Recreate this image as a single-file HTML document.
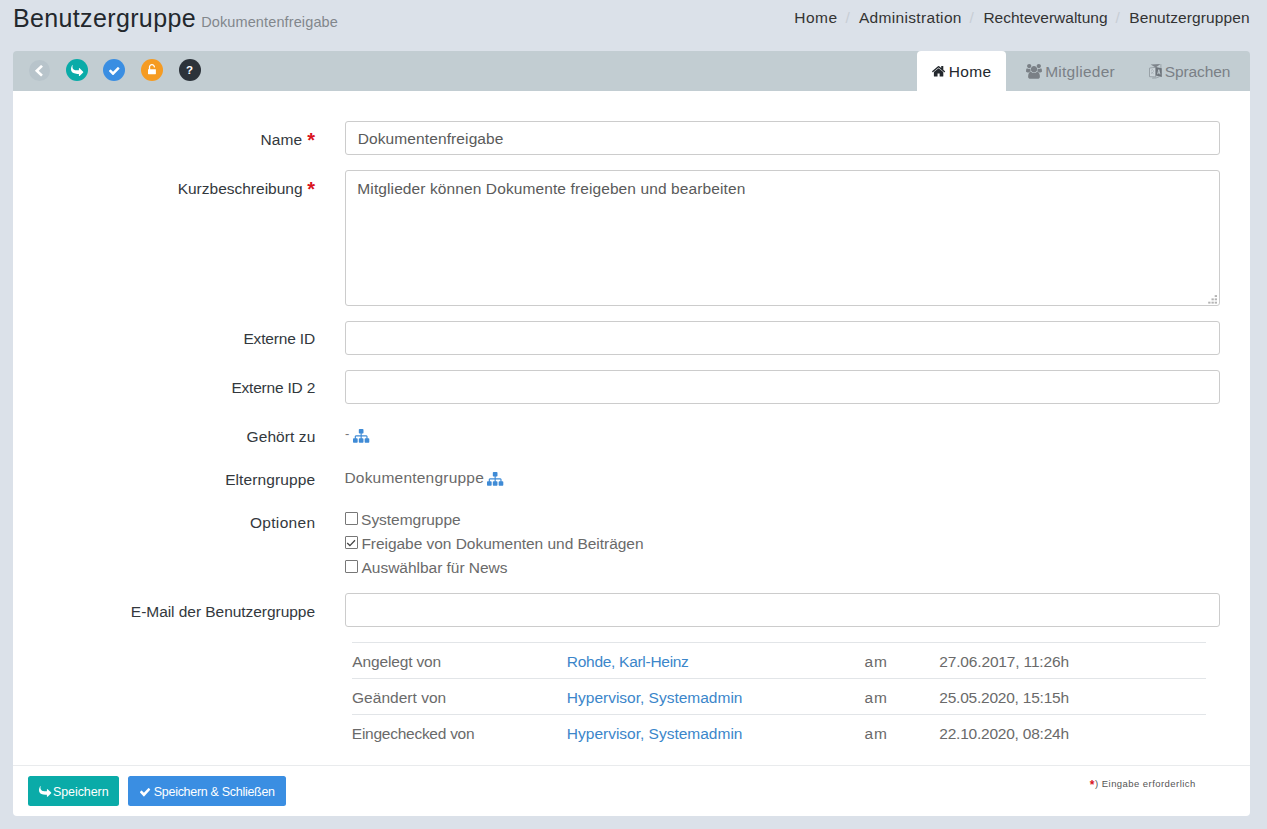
<!DOCTYPE html>
<html lang="de">
<head>
<meta charset="utf-8">
<title>Benutzergruppe</title>
<style>
*{box-sizing:border-box;margin:0;padding:0}
html,body{width:1267px;height:829px;overflow:hidden}
body{background:#dbe1e9;font-family:"Liberation Sans",sans-serif;font-size:15.5px;color:#333;position:relative}
.t{position:absolute;white-space:nowrap;font-weight:400}
.a{position:absolute}
.toolbar{left:13px;top:51px;width:1237px;height:40px;background:#c2cdd2;border-radius:4px 4px 0 0}
.panel{left:13px;top:91px;width:1237px;height:725px;background:#fff;border-radius:0 0 4px 4px}
.circ{top:59px;width:22px;height:22px;border-radius:50%}
.tabact{left:917px;top:51px;width:89px;height:40px;background:#fff;border-radius:4px 4px 0 0}
.inp{left:345px;width:875px;height:34px;border:1px solid #ccc;border-radius:3px;background:#fff}
.cb{left:345px;width:13px;height:13px;border:1px solid #777;border-radius:1px;background:#fff}
.tl{left:352px;width:853.5px;height:1px;background:#e2e5e8}
.btn{top:776px;height:30px;border-radius:2.5px}
.sep{top:7.5px;font-size:15.5px;line-height:20px;color:#c8ced5}
.req{color:#d9141e;font-weight:700;font-size:20px;line-height:20px}
svg{position:absolute;overflow:visible}
</style>
</head>
<body>
<div class="a toolbar"></div>
<div class="a panel"></div>
<div class="a tabact"></div>

<!-- breadcrumb separators -->
<div class="t sep" style="left:845.5px">/</div>
<div class="t sep" style="left:969.5px">/</div>
<div class="t sep" style="left:1115.5px">/</div>

<!-- toolbar round buttons -->
<div class="a circ" style="left:28.5px;top:59.5px;width:21px;height:21px;background:#b8c4cb"></div>
<div class="a circ" style="left:66px;background:#0aaba8"></div>
<div class="a circ" style="left:103px;background:#3a8ee2"></div>
<div class="a circ" style="left:141px;background:#f59b22"></div>
<div class="a circ" style="left:179px;background:#2c333a"></div>
<svg style="left:35.4px;top:64.8px" width="7.80" height="11.40" viewBox="410 26 1036 1612" preserveAspectRatio="none"><path fill="#fff" d="M1427 301l-531 531 531 531q19 19 19 45t-19 45l-166 166q-19 19-45 19t-45-19l-742-742q-19-19-19-45t19-45l742-742q19-19 45-19t45 19l166 166q19 19 19 45t-19 45z"/></svg>
<svg style="left:70.8px;top:64.9px" width="12.30" height="11.10" viewBox="0 64 1792 1600" preserveAspectRatio="none"><path fill="#fff" transform="translate(0,1728) scale(1,-1)" d="M1792 640q0 26-19 45l-512 512q-19 19-45 19t-45-19-19-45v-256h-224q-98 0-175.500 6t-154 21.500-133 42.500-105.500 69.500-80 101-48.500 138.500-17.500 181q0 55 5 123 0 6 2.500 23.500t2.500 26.500q0 15-8.500 25t-23.500 10q-16 0-28-17-7-9-13-22t-13.500-30-10.500-24q-127-285-127-451 0-199 53-333 162-403 875-403h224v-256q0-26 19-45t45-19 45 19l512 512q19 19 19 45z"/></svg>
<svg style="left:108.9px;top:66.8px" width="10.50" height="8.10" viewBox="121 334 1550 1188" preserveAspectRatio="none"><path fill="#fff" d="M1671 566q0 40-28 68l-724 724-136 136q-28 28-68 28t-68-28l-136-136-362-362q-28-28-28-68t28-68l136-136q28-28 68-28t68 28l294 295 656-657q28-28 68-28t68 28l136 136q28 28 28 68z"/></svg>
<svg style="left:148.0px;top:64.4px" width="7.90" height="10.30" viewBox="320 0 1152 1536" preserveAspectRatio="none"><path fill="#fff" d="M1376 768q40 0 68 28t28 68v576q0 40-28 68t-68 28h-960q-40 0-68-28t-28-68v-576q0-40 28-68t68-28h32v-320q0-185 131.500-316.500t316.500-131.500 316.500 131.500 131.500 316.500q0 26-19 45t-45 19h-64q-26 0-45-19t-19-45q0-106-75-181t-181-75-181 75-75 181v320h736z"/></svg>
<div class="t" id="qm" style="left:186.1px;top:63.4px;font-size:11.5px;line-height:15px;font-weight:700;color:#fff">?</div>

<!-- tab icons -->
<svg style="left:932.0px;top:66.2px" width="13.20" height="10.60" viewBox="89.88888549804688 253 1612.22216796875 1283" preserveAspectRatio="none"><path fill="#23282d" d="M1472 992v480q0 26-19 45t-45 19h-384v-384h-256v384h-384q-26 0-45-19t-19-45v-480q0-1 .5-3t.5-3l575-474 575 474q1 2 1 6zm223-69l-62 74q-8 9-21 11h-3q-13 0-21-7l-692-577-692 577q-12 8-24 7-13-2-21-11l-62-74q-8-10-7-23.500t11-21.500l719-599q32-26 76-26t76 26l244 204v-195q0-14 9-23t23-9h192q14 0 23 9t9 23v408l219 182q10 8 11 21.500t-7 23.500z"/></svg>
<svg style="left:1025.8px;top:64.0px" width="16.00" height="14.80" viewBox="-64 0 1920 1792" preserveAspectRatio="none"><path fill="#7a8086" d="M529 896q-162 5-265 128h-134q-82 0-138-40.500t-56-118.500q0-353 124-353 6 0 43.500 21t97.500 42.500 119 21.500q67 0 133-23-5 37-5 66 0 139 81 256zm1071 637q0 120-73 189.500t-194 69.500h-874q-121 0-194-69.500t-73-189.500q0-53 3.500-103.500t14-109 26.500-108.500 43-97.500 62-81 85.500-53.500 111.500-20q10 0 43 21.500t73 48 107 48 135 21.500 135-21.500 107-48 73-48 43-21.500q61 0 111.500 20t85.500 53.500 62 81 43 97.500 26.500 108.500 14 109 3.500 103.500zm-1024-1277q0 106-75 181t-181 75-181-75-75-181 75-181 181-75 181 75 75 181zm704 384q0 159-112.500 271.500t-271.500 112.500-271.500-112.500-112.500-271.500 112.500-271.500 271.500-112.500 271.500 112.500 112.500 271.500zm576 225q0 78-56 118.500t-138 40.500h-134q-103-123-265-128 81-117 81-256 0-29-5-66 66 23 133 23 59 0 119-21.500t97.500-42.500 43.500-21q124 0 124 353zm-128-609q0 106-75 181t-181 75-181-75-75-181 75-181 181-75 181 75 75 181z"/></svg>
<svg style="left:1149px;top:64px" width="13" height="15" viewBox="0 0 13 15"><path d="M0.5 4.1 L6.7 3.3 V12.9 L0.5 12.7 Z" fill="#cbd4d9" stroke="#8d959c" stroke-width="0.8"/><path d="M1.6 0.4 L11.6 0.1 L6.7 3.5 Z" fill="#7d848b"/><path d="M11.9 0.2 V4.2" stroke="#8d959c" stroke-width="0.7"/><path d="M6.7 3.1 L12.8 4.3 V12.9 L6.7 11.4 Z" fill="#6d747b"/><path d="M8.6 10.2 L9.8 5.6 L11 10.4 M9 8.8 H10.7" fill="none" stroke="#c3cdd3" stroke-width="0.9"/><path d="M2.2 6.4 Q3.6 4.8 4.6 6.6 M2 9.6 Q3.6 8.4 4.8 7.4 M2.4 8 L4.6 9.8" fill="none" stroke="#9aa3aa" stroke-width="0.7"/><path d="M3.2 14.1 Q7.2 14.6 10.6 12.6" fill="none" stroke="#8d959c" stroke-width="0.8"/></svg>

<!-- inputs -->
<div class="a inp" style="top:121px"></div>
<div class="a inp" style="top:170px;height:136px"></div>
<div class="a inp" style="top:321px"></div>
<div class="a inp" style="top:370px"></div>
<div class="a inp" style="top:593px"></div>
<svg style="left:1208px;top:295px" width="10" height="9" viewBox="0 0 10 9"><g fill="#b4b4b4"><rect x="6.7" y="0.1" width="2.3" height="1.9"/><rect x="3.5" y="3.4" width="2.3" height="1.9"/><rect x="6.7" y="3.4" width="2.3" height="1.9"/><rect x="0.2" y="6.7" width="2.3" height="1.9"/><rect x="3.5" y="6.7" width="2.3" height="1.9"/><rect x="6.7" y="6.7" width="2.3" height="1.9"/></g></svg>

<!-- required stars -->
<div class="t req" style="left:307.3px;top:130px">*</div>
<div class="t req" style="left:307.3px;top:179px">*</div>

<!-- dash + sitemap icons -->
<div class="t" id="dash" style="left:345px;top:424.3px;font-size:13px;line-height:20px;color:#777;letter-spacing:0">-</div>
<svg style="left:353.1px;top:429.2px" width="16.30" height="13.80" viewBox="0 128 1792 1536" preserveAspectRatio="none"><path fill="#3f8bd6" d="M1792 1248v320q0 40-28 68t-68 28h-320q-40 0-68-28t-28-68v-320q0-40 28-68t68-28h96v-192h-512v192h96q40 0 68 28t28 68v320q0 40-28 68t-68 28h-320q-40 0-68-28t-28-68v-320q0-40 28-68t68-28h96v-192h-512v192h96q40 0 68 28t28 68v320q0 40-28 68t-68 28h-320q-40 0-68-28t-28-68v-320q0-40 28-68t68-28h96v-192q0-52 38-90t90-38h512v-192h-96q-40 0-68-28t-28-68v-320q0-40 28-68t68-28h320q40 0 68 28t28 68v320q0 40-28 68t-68 28h-96v192h512q52 0 90 38t38 90v192h96q40 0 68 28t28 68z"/></svg>
<svg style="left:487px;top:472.2px" width="16.30" height="13.80" viewBox="0 128 1792 1536" preserveAspectRatio="none"><path fill="#3f8bd6" d="M1792 1248v320q0 40-28 68t-68 28h-320q-40 0-68-28t-28-68v-320q0-40 28-68t68-28h96v-192h-512v192h96q40 0 68 28t28 68v320q0 40-28 68t-68 28h-320q-40 0-68-28t-28-68v-320q0-40 28-68t68-28h96v-192h-512v192h96q40 0 68 28t28 68v320q0 40-28 68t-68 28h-320q-40 0-68-28t-28-68v-320q0-40 28-68t68-28h96v-192q0-52 38-90t90-38h512v-192h-96q-40 0-68-28t-28-68v-320q0-40 28-68t68-28h320q40 0 68 28t28 68v320q0 40-28 68t-68 28h-96v192h512q52 0 90 38t38 90v192h96q40 0 68 28t28 68z"/></svg>

<!-- checkboxes -->
<div class="a cb" style="top:512px"></div>
<div class="a cb" style="top:536px"></div>
<div class="a cb" style="top:560px"></div>
<svg style="left:345px;top:536px" width="13" height="13" viewBox="0 0 13 13"><path d="M2.2 7.1 L4.9 9.6 L10 4.3" fill="none" stroke="#444" stroke-width="1.3"/></svg>

<!-- info table lines -->
<div class="a tl" style="top:642px"></div>
<div class="a tl" style="top:678px"></div>
<div class="a tl" style="top:714px"></div>

<!-- footer -->
<div class="a" style="left:13px;top:765px;width:1237px;height:1px;background:#e9ebed"></div>
<div class="a btn" style="left:28px;width:91px;background:#0aaba8"></div>
<div class="a btn" style="left:128px;width:158px;background:#3a8ee2"></div>
<svg style="left:38.7px;top:786.2px" width="12.30" height="10.80" viewBox="0 64 1792 1600" preserveAspectRatio="none"><path fill="#fff" transform="translate(0,1728) scale(1,-1)" d="M1792 640q0 26-19 45l-512 512q-19 19-45 19t-45-19-19-45v-256h-224q-98 0-175.500 6t-154 21.500-133 42.500-105.500 69.500-80 101-48.500 138.500-17.500 181q0 55 5 123 0 6 2.500 23.500t2.500 26.500q0 15-8.500 25t-23.500 10q-16 0-28-17-7-9-13-22t-13.500-30-10.500-24q-127-285-127-451 0-199 53-333 162-403 875-403h224v-256q0-26 19-45t45-19 45 19l512 512q19 19 19 45z"/></svg>
<svg style="left:139.9px;top:787.6px" width="10.20" height="8.40" viewBox="121 334 1550 1188" preserveAspectRatio="none"><path fill="#fff" d="M1671 566q0 40-28 68l-724 724-136 136q-28 28-68 28t-68-28l-136-136-362-362q-28-28-28-68t28-68l136-136q28-28 68-28t68 28l294 295 656-657q28-28 68-28t68 28l136 136q28 28 28 68z"/></svg>
<div class="t" id="ftast" style="left:1089.8px;top:778.4px;font-size:12px;line-height:14px;font-weight:700;color:#d9141e">*</div>
<div class="t" id="h1" style="left:12.88px;top:2.13px;font-size:25px;line-height:32px;letter-spacing:0.369px;color:#23282d">Benutzergruppe</div>
<div class="t" id="h1s" style="left:201.16px;top:13.27px;font-size:14.5px;line-height:19px;letter-spacing:0.121px;color:#82878c">Dokumentenfreigabe</div>
<div class="t" id="bc1" style="left:794.27px;top:7.53px;font-size:15.5px;line-height:20px;letter-spacing:0.505px;color:#333">Home</div>
<div class="t" id="bc2" style="left:858.91px;top:7.53px;font-size:15.5px;line-height:20px;letter-spacing:0.334px;color:#333">Administration</div>
<div class="t" id="bc3" style="left:983.40px;top:7.53px;font-size:15.5px;line-height:20px;letter-spacing:0.006px;color:#333">Rechteverwaltung</div>
<div class="t" id="bc4" style="left:1129.24px;top:7.53px;font-size:15.5px;line-height:20px;letter-spacing:0.098px;color:#333">Benutzergruppen</div>
<div class="t" id="t1" style="left:948.86px;top:62.43px;font-size:15.5px;line-height:20px;letter-spacing:0.307px;color:#23282d">Home</div>
<div class="t" id="t2" style="left:1045.18px;top:62.43px;font-size:15.5px;line-height:20px;letter-spacing:0.261px;color:#7a8086">Mitglieder</div>
<div class="t" id="t3" style="left:1164.87px;top:62.43px;font-size:15.5px;line-height:20px;letter-spacing:-0.135px;color:#7a8086">Sprachen</div>
<div class="t" id="l1" style="left:260.54px;top:129.53px;font-size:15.5px;line-height:20px;letter-spacing:0.080px;color:#33383d">Name</div>
<div class="t" id="l2" style="left:177.67px;top:179.43px;font-size:15.5px;line-height:20px;letter-spacing:-0.003px;color:#33383d">Kurzbeschreibung</div>
<div class="t" id="l3" style="left:243.39px;top:328.63px;font-size:15.5px;line-height:20px;letter-spacing:-0.161px;color:#33383d">Externe ID</div>
<div class="t" id="l4" style="left:231.41px;top:377.63px;font-size:15.5px;line-height:20px;letter-spacing:-0.209px;color:#33383d">Externe ID 2</div>
<div class="t" id="l5" style="left:246.54px;top:426.83px;font-size:15.5px;line-height:20px;letter-spacing:0.086px;color:#33383d">Gehört zu</div>
<div class="t" id="l6" style="left:225.13px;top:470.33px;font-size:15.5px;line-height:20px;letter-spacing:0.103px;color:#33383d">Elterngruppe</div>
<div class="t" id="l7" style="left:249.94px;top:513.43px;font-size:15.5px;line-height:20px;letter-spacing:0.316px;color:#33383d">Optionen</div>
<div class="t" id="l8" style="left:130.86px;top:601.53px;font-size:15.5px;line-height:20px;letter-spacing:-0.045px;color:#33383d">E-Mail der Benutzergruppe</div>
<div class="t" id="i1" style="left:357.67px;top:129.43px;font-size:15.5px;line-height:20px;letter-spacing:0.111px;color:#5a5a5a">Dokumentenfreigabe</div>
<div class="t" id="i2" style="left:357.34px;top:179.23px;font-size:15.5px;line-height:20px;letter-spacing:0.105px;color:#5a5a5a">Mitglieder können Dokumente freigeben und bearbeiten</div>
<div class="t" id="v2" style="left:344.41px;top:467.53px;font-size:15.5px;line-height:20px;letter-spacing:0.216px;color:#6a6a6a">Dokumentengruppe</div>
<div class="t" id="c1" style="left:361.12px;top:510.13px;font-size:15.5px;line-height:20px;letter-spacing:-0.037px;color:#6a6a6a">Systemgruppe</div>
<div class="t" id="c2" style="left:361.41px;top:534.23px;font-size:15.5px;line-height:20px;letter-spacing:-0.038px;color:#6a6a6a">Freigabe von Dokumenten und Beiträgen</div>
<div class="t" id="c3" style="left:361.55px;top:557.83px;font-size:15.5px;line-height:20px;letter-spacing:-0.027px;color:#6a6a6a">Auswählbar für News</div>
<div class="t" id="r1a" style="left:352.35px;top:652.33px;font-size:15.5px;line-height:20px;letter-spacing:-0.147px;color:#6a6a6a">Angelegt von</div>
<div class="t" id="r2a" style="left:352.01px;top:688.23px;font-size:15.5px;line-height:20px;letter-spacing:0.026px;color:#6a6a6a">Geändert von</div>
<div class="t" id="r3a" style="left:351.86px;top:724.03px;font-size:15.5px;line-height:20px;letter-spacing:-0.262px;color:#6a6a6a">Eingechecked von</div>
<div class="t" id="r1b" style="left:566.86px;top:652.33px;font-size:15.5px;line-height:20px;letter-spacing:-0.290px;color:#3b86ca">Rohde, Karl-Heinz</div>
<div class="t" id="r2b" style="left:566.87px;top:688.23px;font-size:15.5px;line-height:20px;letter-spacing:-0.006px;color:#3b86ca">Hypervisor, Systemadmin</div>
<div class="t" id="r3b" style="left:566.87px;top:724.03px;font-size:15.5px;line-height:20px;letter-spacing:-0.006px;color:#3b86ca">Hypervisor, Systemadmin</div>
<div class="t" id="r1c" style="left:864.39px;top:652.33px;font-size:15.5px;line-height:20px;letter-spacing:0.930px;color:#6a6a6a">am</div>
<div class="t" id="r2c" style="left:864.39px;top:688.23px;font-size:15.5px;line-height:20px;letter-spacing:0.930px;color:#6a6a6a">am</div>
<div class="t" id="r3c" style="left:864.39px;top:724.03px;font-size:15.5px;line-height:20px;letter-spacing:0.930px;color:#6a6a6a">am</div>
<div class="t" id="r1d" style="left:939.27px;top:652.33px;font-size:15.5px;line-height:20px;letter-spacing:-0.156px;color:#6a6a6a">27.06.2017, 11:26h</div>
<div class="t" id="r2d" style="left:939.27px;top:688.23px;font-size:15.5px;line-height:20px;letter-spacing:-0.224px;color:#6a6a6a">25.05.2020, 15:15h</div>
<div class="t" id="r3d" style="left:939.27px;top:724.03px;font-size:15.5px;line-height:20px;letter-spacing:-0.224px;color:#6a6a6a">22.10.2020, 08:24h</div>
<div class="t" id="b1" style="left:52.99px;top:783.67px;font-size:12.5px;line-height:16px;letter-spacing:-0.082px;color:#fff">Speichern</div>
<div class="t" id="b2" style="left:153.82px;top:784.47px;font-size:12.5px;line-height:16px;letter-spacing:-0.297px;color:#fff">Speichern &amp; Schließen</div>
<div class="t" id="ft" style="left:1095.10px;top:777.71px;font-size:9.5px;line-height:12px;letter-spacing:0.446px;color:#555">) Eingabe erforderlich</div>
</body>
</html>
